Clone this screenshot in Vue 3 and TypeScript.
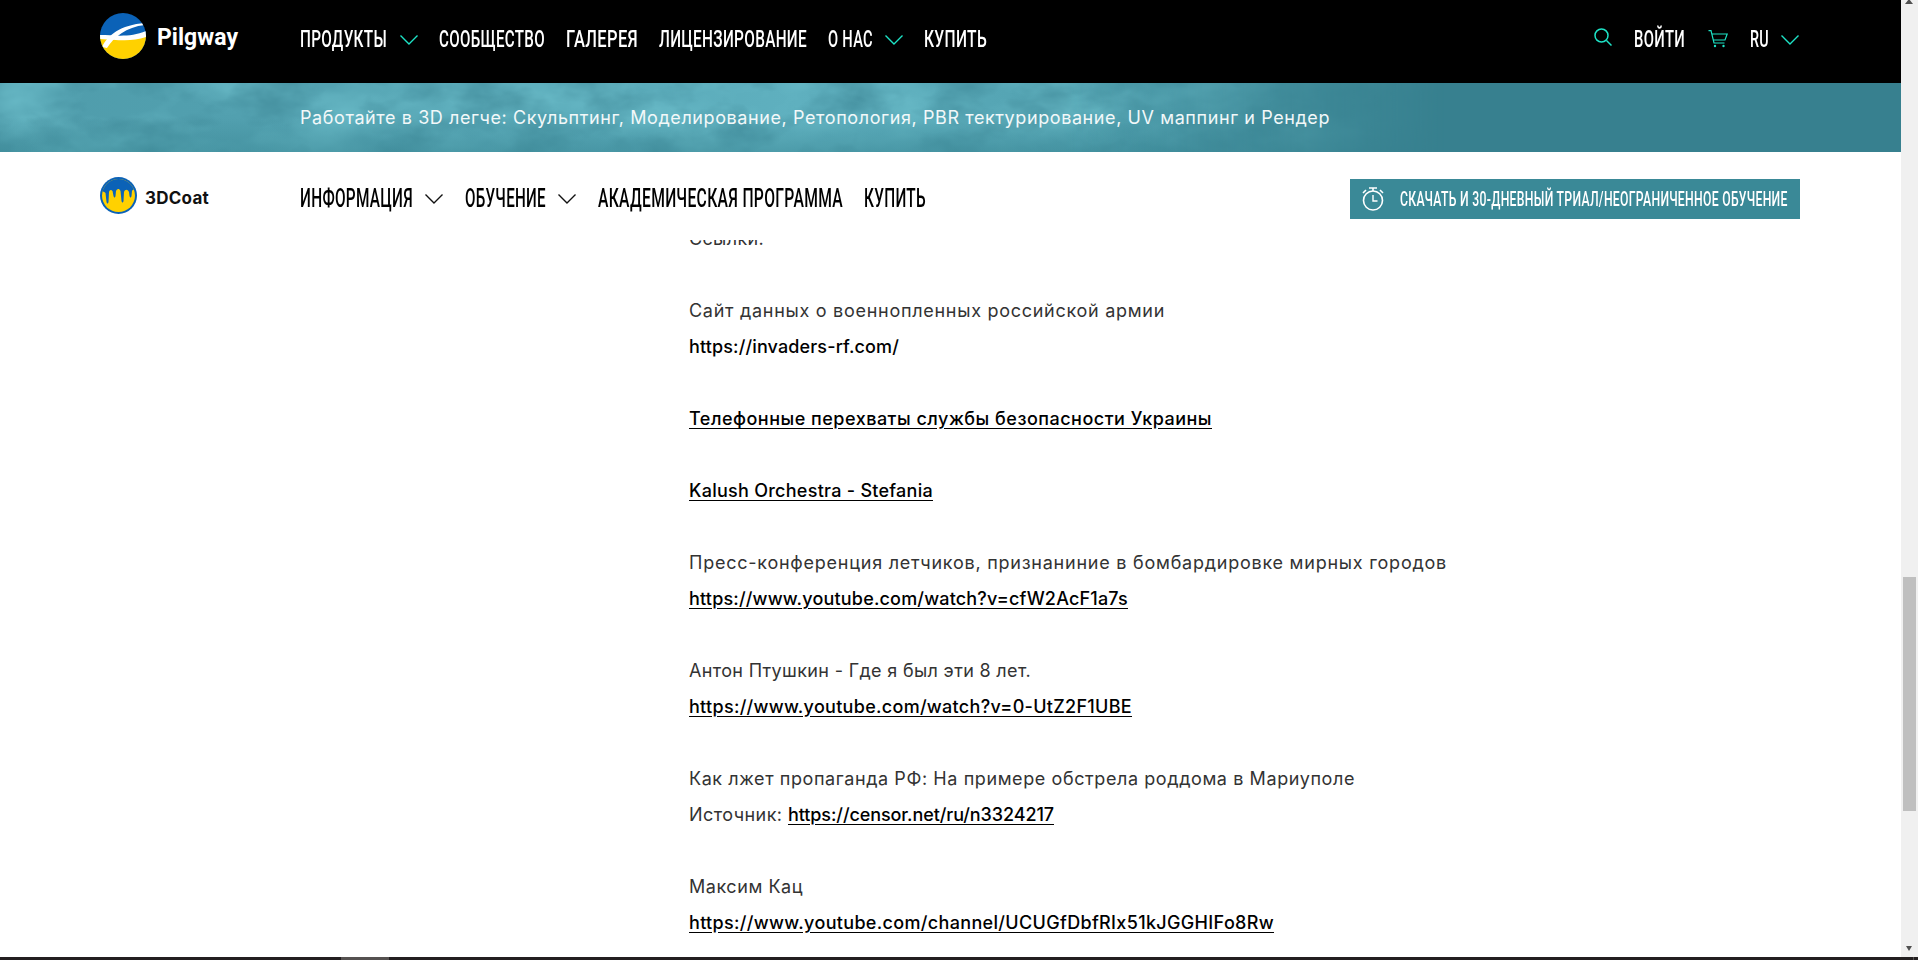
<script setup lang="ts">
interface NavItem { label: string; width: number; chevron?: boolean }
interface Run { text: string; width: number; link?: boolean; plain?: boolean }

const canvas = document.createElement('canvas').getContext('2d') as CanvasRenderingContext2D

function natural(text: string, font: string): number {
  canvas.font = font
  return canvas.measureText(text).width
}

const NAV_SPACING = 0.5

function squeeze(text: string, width: number, size: number): string {
  const full = natural(text, `500 ${size}px Roboto`) + NAV_SPACING * text.length
  return `scaleX(${(width / full).toFixed(4)})`
}

function track(text: string, width: number, font: string): string {
  return `${((width - natural(text, font)) / text.length).toFixed(3)}px`
}

const BODY = '400 18px Inter'
const LINK = '500 18px Inter'

function runSpacing(run: Run): string {
  return track(run.text, run.width, run.link || run.plain ? LINK : BODY)
}

const topNav: NavItem[] = [
  { label: 'ПРОДУКТЫ', width: 87, chevron: true },
  { label: 'СООБЩЕСТВО', width: 106 },
  { label: 'ГАЛЕРЕЯ', width: 72 },
  { label: 'ЛИЦЕНЗИРОВАНИЕ', width: 148 },
  { label: 'О НАС', width: 45, chevron: true },
  { label: 'КУПИТЬ', width: 63 },
]

const subNav: NavItem[] = [
  { label: 'ИНФОРМАЦИЯ', width: 113, chevron: true },
  { label: 'ОБУЧЕНИЕ', width: 81, chevron: true },
  { label: 'АКАДЕМИЧЕСКАЯ ПРОГРАММА', width: 245 },
  { label: 'КУПИТЬ', width: 62 },
]

const blocks: Run[][][] = [
  [[{ text: 'Ссылки:', width: 75 }]],
  [
    [{ text: 'Сайт данных о военнопленных российской армии', width: 476 }],
    [{ text: 'https://invaders-rf.com/', width: 210, plain: true }],
  ],
  [[{ text: 'Телефонные перехваты службы безопасности Украины', width: 523, link: true }]],
  [[{ text: 'Kalush Orchestra - Stefania', width: 244, link: true }]],
  [
    [{ text: 'Пресс-конференция летчиков, признаниние в бомбардировке мирных городов', width: 758 }],
    [{ text: 'https://www.youtube.com/watch?v=cfW2AcF1a7s', width: 439, link: true }],
  ],
  [
    [{ text: 'Антон Птушкин - Где я был эти 8 лет.', width: 342 }],
    [{ text: 'https://www.youtube.com/watch?v=0-UtZ2F1UBE', width: 443, link: true }],
  ],
  [
    [{ text: 'Как лжет пропаганда РФ: На примере обстрела роддома в Мариуполе', width: 666 }],
    [
      { text: 'Источник: ', width: 99 },
      { text: 'https://censor.net/ru/n3324217', width: 266, link: true },
    ],
  ],
  [
    [{ text: 'Максим Кац', width: 114 }],
    [{ text: 'https://www.youtube.com/channel/UCUGfDbfRIx51kJGGHIFo8Rw', width: 585, link: true }],
  ],
]
</script>

<template>
  <div class="page">
    <div class="window">
      <div class="main">
        <header class="topbar">
          <a class="brand">
            <svg class="brand-mark" viewBox="0 0 46 46" width="46" height="46">
              <defs><clipPath id="disc"><circle cx="23" cy="23" r="23" /></clipPath></defs>
              <g clip-path="url(#disc)">
                <rect width="46" height="46" fill="#0b62b7" />
                <path d="M0 24 C14 25 30 26 46 23 V46 H0 Z" fill="#ffd100" />
                <path d="M2 34 C8 22 20 12 45 10 L45 12 C26 14 14 24 7 35 Z" fill="#fff" />
                <path d="M0 22 C14 22 30 25 46 18 L46 24 C32 29 18 27 0 26 Z" fill="#fff" />
              </g>
            </svg>
            <span class="brand-name" :style="{ letterSpacing: track('Pilgway', 81, '700 23px Roboto') }">Pilgway</span>
          </a>
          <nav class="nav">
            <div v-for="item in topNav" :key="item.label" class="nav-item">
              <span class="fit" :style="{ width: item.width + 'px' }">
                <span class="fit-text" :style="{ transform: squeeze(item.label, item.width, 24) }">{{ item.label }}</span>
              </span>
              <svg v-if="item.chevron" class="chev" viewBox="0 0 18 10" width="18" height="10">
                <path d="M0.5 0.5 L9 9 L17.5 0.5" fill="none" stroke="#1de3c6" stroke-width="1.4" />
              </svg>
            </div>
          </nav>
          <div class="tools">
            <svg class="tool-search" viewBox="0 0 18 18" width="18" height="18">
              <circle cx="7.5" cy="7.5" r="6.5" fill="none" stroke="#1de3c6" stroke-width="1.5" />
              <path d="M12.5 12.5 L17.5 17.5" stroke="#1de3c6" stroke-width="1.5" />
            </svg>
            <span class="fit" style="width: 51px">
              <span class="fit-text" :style="{ transform: squeeze('ВОЙТИ', 51, 24) }">ВОЙТИ</span>
            </span>
            <svg class="tool-cart" viewBox="0 0 20 18" width="20" height="18">
              <path d="M0.5 0.7 H3 L6 13 H16.5 M4 4 H19.2 L17 10 H5.4" fill="none" stroke="#1de3c6" stroke-width="1.2" />
              <circle cx="7" cy="16" r="1.2" fill="#1de3c6" />
              <circle cx="15.5" cy="16" r="1.2" fill="#1de3c6" />
            </svg>
            <div class="nav-item">
              <span class="fit" style="width: 19px">
                <span class="fit-text" :style="{ transform: squeeze('RU', 19, 24) }">RU</span>
              </span>
              <svg class="chev" viewBox="0 0 18 10" width="18" height="10">
                <path d="M0.5 0.5 L9 9 L17.5 0.5" fill="none" stroke="#1de3c6" stroke-width="1.4" />
              </svg>
            </div>
          </div>
        </header>

        <section class="band">
          <svg class="clouds" width="1901" height="69" aria-hidden="true">
            <defs>
              <filter id="cloud-light" x="0" y="0" width="100%" height="100%" color-interpolation-filters="sRGB">
                <feTurbulence type="fractalNoise" baseFrequency="0.011 0.02" numOctaves="4" seed="11" />
                <feColorMatrix type="matrix" values="0 0 0 0 0.42  0 0 0 0 0.74  0 0 0 0 0.79  1.9 0 0 0 -0.72" />
              </filter>
              <filter id="cloud-dark" x="0" y="0" width="100%" height="100%" color-interpolation-filters="sRGB">
                <feTurbulence type="fractalNoise" baseFrequency="0.016 0.028" numOctaves="4" seed="29" />
                <feColorMatrix type="matrix" values="0 0 0 0 0.25  0 0 0 0 0.54  0 0 0 0 0.6  1.7 0 0 0 -0.72" />
              </filter>
              <linearGradient id="fade" x1="0" x2="1" y1="0" y2="0">
                <stop offset="0" stop-color="#fff" />
                <stop offset="0.56" stop-color="#fff" />
                <stop offset="0.76" stop-color="#000" />
              </linearGradient>
              <mask id="fade-mask"><rect width="1901" height="69" fill="url(#fade)" /></mask>
              <linearGradient id="shade" x1="0" x2="1" y1="0" y2="0">
                <stop offset="0" stop-color="#4f9cab" />
                <stop offset="0.22" stop-color="#54a3b2" />
                <stop offset="0.42" stop-color="#5fb0bf" />
                <stop offset="0.62" stop-color="#4d9cab" />
              </linearGradient>
              <linearGradient id="floor" x1="0" x2="0" y1="0" y2="1">
                <stop offset="0.5" stop-color="#3a8795" stop-opacity="0" />
                <stop offset="1" stop-color="#3a8795" stop-opacity="0.55" />
              </linearGradient>
            </defs>
            <g mask="url(#fade-mask)">
              <rect width="1901" height="69" fill="url(#shade)" />
              <rect width="1901" height="69" filter="url(#cloud-light)" />
              <rect width="1901" height="69" filter="url(#cloud-dark)" />
              <rect width="1901" height="69" fill="url(#floor)" />
            </g>
          </svg>
          <p class="band-text" :style="{ letterSpacing: track('Работайте в 3D легче: Скульптинг, Моделирование, Ретопология, PBR тектурирование, UV маппинг и Рендер', 1030, BODY) }">Работайте в 3D легче: Скульптинг, Моделирование, Ретопология, PBR тектурирование, UV маппинг и Рендер</p>
        </section>

        <div class="subnav">
          <a class="product">
            <svg viewBox="0 0 37 37" width="37" height="37">
              <defs><clipPath id="coat"><circle cx="18.5" cy="18.5" r="16.5" /></clipPath></defs>
              <circle cx="18.5" cy="18.5" r="18.5" fill="#0b62b7" />
              <g clip-path="url(#coat)">
                <rect width="37" height="37" fill="#ffd100" />
                <path d="M0 0 H37 V14 C35 12 33 12 32 14 L31.5 19 C31 21 30 21 29.5 19 L29 15 C27.5 12 25 12 24 15 L23.5 24 C23 26 22 26 21.5 24 L20.5 14 C19 11 17 12 16 14 L15.5 19 C15 21 14 21 13.5 19 L12.5 14 C11 12 9.5 13 9 15 L8.5 25 C8 27 7 27 6.5 25 L5.5 16 C4 14 2 14 0 16 Z" fill="#0b62b7" />
              </g>
            </svg>
            <span class="product-name" :style="{ letterSpacing: track('3DCoat', 64, '700 17px Inter') }">3DCoat</span>
          </a>
          <nav class="nav nav-dark">
            <div v-for="item in subNav" :key="item.label" class="nav-item">
              <span class="fit" :style="{ width: item.width + 'px' }">
                <span class="fit-text" :style="{ transform: squeeze(item.label, item.width, 25.5) }">{{ item.label }}</span>
              </span>
              <svg v-if="item.chevron" class="chev" viewBox="0 0 18 10" width="18" height="10">
                <path d="M0.5 0.5 L9 9 L17.5 0.5" fill="none" stroke="#111" stroke-width="1.4" />
              </svg>
            </div>
          </nav>
          <a class="cta">
            <svg viewBox="0 0 22 24" width="22" height="24">
              <g fill="none" stroke="#fff" stroke-width="1.6">
                <circle cx="11" cy="13.5" r="9.5" />
                <path d="M11 8 V14 H15.5" stroke-width="1.4" />
                <path d="M7 1 H15 M11 1 V4 M1 6 L4 3 M21 6 L18 3" />
              </g>
            </svg>
            <span class="fit" style="width: 388px">
              <span class="fit-text" :style="{ transform: squeeze('СКАЧАТЬ И 30-ДНЕВНЫЙ ТРИАЛ/НЕОГРАНИЧЕННОЕ ОБУЧЕНИЕ', 388, 21) }">СКАЧАТЬ И 30-ДНЕВНЫЙ ТРИАЛ/НЕОГРАНИЧЕННОЕ ОБУЧЕНИЕ</span>
            </span>
          </a>
        </div>

        <main class="viewport">
          <article class="article">
            <div v-for="(block, b) in blocks" :key="b" class="block">
              <p v-for="(line, l) in block" :key="l" class="line">
                <template v-for="run in line" :key="run.text">
                  <a v-if="run.link" class="link" :style="{ letterSpacing: runSpacing(run) }">{{ run.text }}</a>
                  <a v-else-if="run.plain" class="plain" :style="{ letterSpacing: runSpacing(run) }">{{ run.text }}</a>
                  <span v-else :style="{ letterSpacing: runSpacing(run) }">{{ run.text }}</span>
                </template>
              </p>
            </div>
          </article>
        </main>
      </div>

      <aside class="scrollbar">
        <i class="arrow-up"></i>
        <div class="thumb"></div>
        <i class="arrow-down"></i>
      </aside>
    </div>
    <div class="taskbar">
      <span class="task"></span>
      <span class="tick"></span>
    </div>
  </div>
</template>

<style>
html, body { margin: 0; background: #fff; overflow: hidden; }
</style>

<style scoped>
.page { width: 1918px; height: 960px; display: flex; flex-direction: column; overflow: hidden; font-family: Inter, "Liberation Sans", sans-serif; }
.window { flex: 1; display: flex; min-height: 0; }
.main { flex: 1; min-width: 0; display: flex; flex-direction: column; }

.topbar { height: 83px; flex: none; background: #000; color: #fff; display: flex; align-items: center; padding: 0 102px 6px 100px; box-sizing: border-box; }
.brand { width: 200px; flex: none; display: flex; align-items: center; gap: 11px; margin-bottom: 5px; }
.brand-mark { flex: none; display: block; }
.brand-name { font: 700 23px/1 Roboto, sans-serif; color: #fff; margin-top: 2px; }

.nav { display: flex; align-items: center; gap: 21px; }
.nav-item { display: flex; align-items: center; gap: 12.5px; }
.nav-dark { color: #000; gap: 21.8px; }
.nav-dark .nav-item { gap: 12px; }
.chev { flex: none; display: block; margin-top: 3px; }
.fit { display: block; flex: none; white-space: nowrap; line-height: 24px; height: 24px; }
.fit-text { display: inline-block; transform-origin: 0 50%; font: 500 24px/24px Roboto, sans-serif; letter-spacing: 0.5px; }
.nav-dark .fit-text { font-size: 25.5px; }

.tools { margin-left: auto; display: flex; align-items: center; }
.tool-search { margin-right: 22px; margin-top: -4px; display: block; }
.tool-cart { margin: 0 22px 0 23px; display: block; }

.band { height: 69px; flex: none; background: #37808f; position: relative; display: flex; align-items: center; padding-left: 300px; overflow: hidden; }
.clouds { position: absolute; left: 0; top: 0; display: block; }
.band-text { position: relative; margin: 0; font: 400 18px/24px Inter, sans-serif; color: #f2f8f9; white-space: nowrap; }

.subnav { height: 88px; flex: none; background: #fff; position: relative; z-index: 1; display: flex; align-items: center; padding: 3px 101px 0 100px; box-sizing: border-box; }
.product { width: 200px; flex: none; display: flex; align-items: center; gap: 8px; margin-bottom: 4px; }
.product svg { display: block; flex: none; }
.product-name { font: 700 17px/1 Inter, sans-serif; color: #111; margin-top: 5px; }
.cta { margin-left: auto; width: 450px; height: 40px; background: #3a8997; color: #fff; display: flex; align-items: center; gap: 16px; padding-left: 12px; box-sizing: border-box; margin-top: 3px; }
.cta svg { display: block; flex: none; }
.cta .fit-text { font-size: 21px; }

.viewport { flex: 1; min-height: 0; overflow: hidden; }
.article { margin: -19px 0 0 689px; width: 900px; font: 400 18px/36px Inter, sans-serif; color: #333; }
.block { margin-bottom: 36px; }
.line { margin: 0; height: 36px; white-space: pre; }
.link { color: #000; font-weight: 500; text-decoration: underline; text-underline-offset: 3px; }
.plain { color: #000; font-weight: 500; }

.scrollbar { width: 17px; flex: none; background: #f0f0f0; position: relative; padding-top: 577px; box-sizing: border-box; display: flex; flex-direction: column; align-items: center; }
.thumb { width: 13px; height: 234px; background: #bfbfbf; }
.arrow-up { position: absolute; left: 4px; top: -1px; border-left: 4.5px solid transparent; border-right: 4.5px solid transparent; border-bottom: 5px solid #505050; }
.arrow-down { position: absolute; left: 5px; top: 946px; border-left: 3.5px solid transparent; border-right: 3.5px solid transparent; border-top: 5px solid #505050; }

.taskbar { height: 3px; flex: none; background: #231f20; position: relative; padding-left: 341px; }
.task { display: block; width: 48px; height: 3px; background: #555150; }
.tick { position: absolute; left: 1913px; top: 0; width: 1px; height: 3px; background: #555150; }
</style>
